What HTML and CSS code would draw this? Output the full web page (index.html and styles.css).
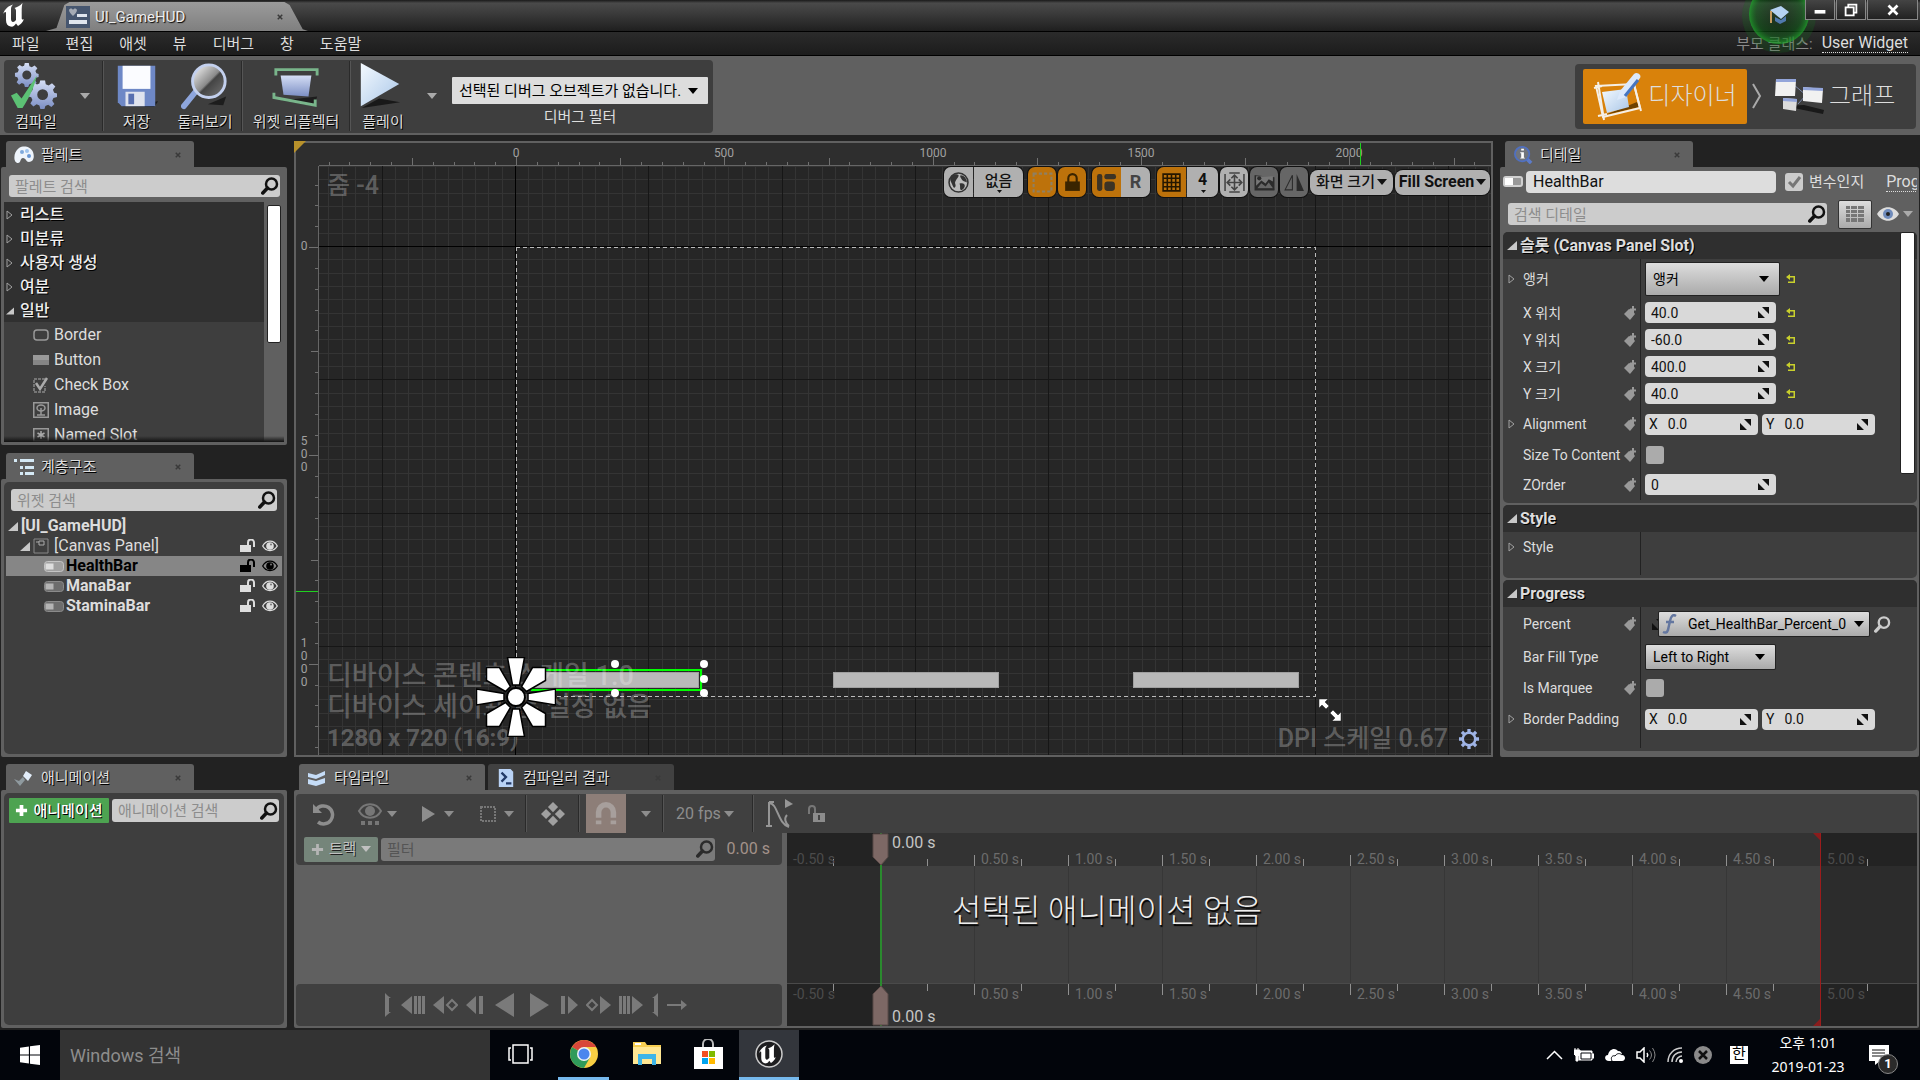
FILE: index.html
```html
<!DOCTYPE html>
<html lang="ko">
<head>
<meta charset="utf-8">
<title>UI_GameHUD</title>
<link rel="stylesheet" href="styles.css">
</head>
<body>
<svg class="defs" aria-hidden="true">
  <defs>
    <linearGradient id="steel" x1="0" y1="0" x2="0" y2="1"><stop offset="0" stop-color="#d5def5"/><stop offset="1" stop-color="#7c8fc4"/></linearGradient>
    <linearGradient id="ice" x1="0" y1="0" x2="1" y2="1"><stop offset="0" stop-color="#f4faff"/><stop offset="1" stop-color="#a9c6e8"/></linearGradient>
    <linearGradient id="glass" x1="0" y1="0" x2="1" y2="1"><stop offset="0" stop-color="#ffffff"/><stop offset=".5" stop-color="#8a8a8a"/><stop offset=".55" stop-color="#444"/><stop offset="1" stop-color="#777"/></linearGradient>
  </defs>
  <symbol id="search" viewBox="0 0 18 18"><circle cx="10.500" cy="7" r="5.500" fill="none" stroke="currentColor" stroke-width="2.500"/><path d="M6.500 11 1.800 16" stroke="currentColor" stroke-width="3.500" stroke-linecap="round"/></symbol>
  <symbol id="down" viewBox="0 0 10 6"><path d="M0 0h10L5 6z" fill="currentColor"/></symbol>
  <symbol id="closed" viewBox="0 0 8 10"><path d="M1 1v8l5-4z" fill="none" stroke="#a0a0a0"/></symbol>
  <symbol id="open" viewBox="0 0 10 9"><path d="M10 0v9H0z" fill="#c8c8c8"/></symbol>
  <symbol id="x" viewBox="0 0 8 8"><path d="m1 1 6 6M7 1 1 7" stroke="#3a3a3a" stroke-width="2"/></symbol>
  <symbol id="u" viewBox="0 0 26 26"><path d="M1 12C3 7 6 4 11 2.500 9 4.500 9 6 9 8v9c0 2 1 3 2 3s2-1 3-2V9c0-1.500-.5-2.500-1.500-3C15 5 18 4 20.500 1c-.5 2-.8 4-.8 6v9c0 1.500.8 2 2.300 1-1.500 4-4.500 6-6 7l-2-2.500C12.500 24 11 25 8.500 24.500 5.500 24 4 21.500 4 18V11c0-1.500-1-1.500-3 1z" fill="currentColor"/></symbol>
  <symbol id="bar" viewBox="0 0 20 11"><rect x=".5" y=".5" width="19" height="10" rx="3" fill="#6d6d6d" stroke="#8a8a8a"/><rect x="1.500" y="2.500" width="8" height="6" fill="#b5b5b5"/></symbol>
  <symbol id="barsel" viewBox="0 0 20 11"><rect x=".5" y=".5" width="19" height="10" rx="3" fill="#a0a0a0" stroke="#c4c4c4"/><rect x="1.500" y="2.500" width="8" height="6" fill="#dedede"/></symbol>
  <symbol id="unlock" viewBox="0 0 16 14"><path d="M0 6h11v7H0z" fill="currentColor"/><path d="M8 6V3.500a3 3 0 0 1 6 0V8" fill="none" stroke="currentColor" stroke-width="2"/></symbol>
  <symbol id="eye" viewBox="0 0 16 12"><path d="M.7 6C4-.5 12-.5 15.300 6 12 12 4 12 .7 6z" fill="none" stroke="currentColor" stroke-width="1.300"/><circle cx="8" cy="6" r="3.800" fill="currentColor"/><circle cx="9" cy="4.500" r="1" fill="#777"/></symbol>
  <symbol id="pin" viewBox="0 0 12 14"><path d="M0 8l5-5 3 1 3 4-5 6z" fill="#999"/><path d="M9 0v7M6 3.500h6" stroke="#999" stroke-width="2"/></symbol>
  <symbol id="drag" viewBox="0 0 11 11"><path d="M4 0h7v7zM0 4v7h7z" fill="#111"/></symbol>
  <symbol id="reset" viewBox="0 0 10 10"><path d="M0 3l4-3v2h5v7H2V7.500h5.500v-4H4V6z" fill="#c9d02c"/></symbol>
  <symbol id="gear" viewBox="0 0 24 24"><path fill-rule="evenodd" d="M10 0h4l.6 3.300 2.400 1L19.800 2.500l2.800 2.800-2 2.700 1 2.400L24 11v3l-3 .8-1 2.300 1.800 2.700-2.500 2.500-2.700-1.800-2.300 1L13.500 24h-3.400l-.8-3-2.300-1-2.700 1.800L1.800 19.300 3.500 16.500l-1-2.300L0 13.500V10l3-.8 1-2.300L2.300 4.300 4.800 2l2.500 1.600 2-.9zM12 7.500a4.500 4.500 0 1 0 0 9 4.500 4.500 0 0 0 0-9z"/></symbol>
  <symbol id="cog" viewBox="0 0 24 24"><circle cx="12" cy="12" r="7.500" fill="none" stroke="currentColor" stroke-width="3"/><path d="M12 0v4M12 20v4M0 12h4M20 12h4M3.500 3.500l3 3M17.500 17.500l3 3M20.500 3.500l-3 3M6.500 17.500l-3 3" stroke="currentColor" stroke-width="4"/></symbol>
</svg>

<header class="titlebar">
  <svg class="logo"><use href="#u"/></svg>
  <div class="doc-tab">
    <svg class="doc-icon" viewBox="0 0 24 22"><rect width="24" height="22" fill="#46566f"/><path d="M3 4c1-2 3-2 4 0 1-2 3-2 4 0 0 2-2 4-4 6-2-2-4-4-4-6z" fill="#a5abb5"/><path d="M11 8h10v3H11zM3 14h18v4H3z" fill="#dfe5ee"/></svg>
    <span>UI_GameHUD</span>
    <svg class="tab-x"><use href="#x"/></svg>
  </div>
  <svg class="tutorial" viewBox="0 0 76 60"><defs><radialGradient id="glow"><stop offset=".2" stop-color="#0a1a0a" stop-opacity=".3"/><stop offset=".75" stop-color="#0d5b16" stop-opacity=".4"/><stop offset="1" stop-color="#1fa52b" stop-opacity=".75"/></radialGradient></defs><circle cx="38" cy="16" r="37" fill="#126b1b" opacity=".25"/><circle cx="38" cy="14" r="30" fill="url(#glow)"/><path d="M29 10l11-4 8 6-8 7z" fill="#b5d2f2"/><path d="M34 17l6 3 5-4v5l-6 3-5-3z" fill="#5079ad"/><path d="M30 11v12" stroke="#c69a5e" stroke-width="2"/></svg>
  <div class="window-buttons">
    <button aria-label="최소화"><svg viewBox="0 0 20 20"><path d="M4 10h12v4H4z" fill="#fff"/></svg></button>
    <button aria-label="복원"><svg viewBox="0 0 20 20"><path d="M7 7V4h9v9h-3M4 7h9v9H4z" fill="none" stroke="#fff" stroke-width="2"/></svg></button>
    <button aria-label="닫기" class="wide"><svg viewBox="0 0 20 20"><path d="m5 5 10 10M15 5 5 15" stroke="#fff" stroke-width="3"/></svg></button>
  </div>
</header>

<nav class="menubar">
  <button>파일</button><button>편집</button><button>애셋</button><button>뷰</button><button>디버그</button><button>창</button><button>도움말</button>
  <span class="parent">부모 클래스:</span><a href="#">User Widget</a>
</nav>

<section class="toolbar">
  <div class="tools">
    <button class="tool compile"><svg viewBox="0 0 50 50"><g fill="url(#steel)"><use href="#gear" x="5" y="1" width="25" height="25"/><use href="#gear" x="19" y="19" width="30" height="30"/></g><path d="M1 35l6-3 5 6 16-24c-3 13-8 23-15 34H8z" fill="#5cc174"/></svg><span>컴파일</span></button>
    <button class="drop" aria-label="컴파일 옵션"><svg><use href="#down"/></svg></button>
    <i class="sep"></i>
    <button class="tool save"><svg viewBox="0 0 50 50"><path d="M9 46l34 1 4-6" fill="#1b1b1b"/><path d="M5 4h39v42H9l-4-4z" fill="#6e88c6"/><path d="M10 4h29v24H10z" fill="#fbfcff"/><path d="M13 31h20v15H13z" fill="#dfe3ee"/><path d="M16 33h6v11h-6z" fill="#586fb0"/></svg><span>저장</span></button>
    <button class="tool browse"><svg viewBox="0 0 50 50"><path d="M28 44l16 1 3-9z" fill="#1d1d1d"/><path d="M16 30 3 46" stroke="#8ea6dd" stroke-width="6" stroke-linecap="round"/><circle cx="29" cy="20" r="17" fill="url(#glass)" stroke="#c3d0ee" stroke-width="3"/></svg><span>둘러보기</span></button>
    <i class="sep"></i>
    <button class="tool reflector"><svg viewBox="0 0 50 50"><path d="M10 40l34 6 3-10z" fill="#1d1d1d"/><path d="M9 14h32l-3 22-26-2z" fill="url(#steel)"/><path d="M4 14V8h43v6M2 32v5l43 8v-6" fill="none" stroke="#79b58b" stroke-width="3"/></svg><span>위젯 리플렉터</span></button>
    <i class="sep"></i>
    <button class="tool play"><svg viewBox="0 0 50 50"><path d="M5 48l18-10 22 4z" fill="#191919"/><path d="M4 1v45l40-23z" fill="url(#ice)"/></svg><span>플레이</span></button>
    <button class="drop" aria-label="플레이 옵션"><svg><use href="#down"/></svg></button>
    <div class="debug">
      <div class="combo"><select id="debug"><option>선택된 디버그 오브젝트가 없습니다.</option></select><svg class="arrow"><use href="#down"/></svg></div>
      <label for="debug">디버그 필터</label>
    </div>
  </div>
  <div class="modes">
    <button class="mode active"><svg viewBox="0 0 50 50"><path d="M12 44l34-8-2-5z" fill="#6e4200"/><path d="M3 15l38-2 6 24-37 9z" fill="none" stroke="#f5efe6" stroke-width="2"/><path d="M5 11l6 38M1 17l8-2M5 45l9-2M40 10l8 30" stroke="#f5efe6" stroke-width="2"/><path d="M9 21l24-3 3 18-22 6z" fill="url(#ice)"/><path d="M24 29l3-9L41 3c3-3 8 1 6 4L33 26z" fill="#dce9fb"/><path d="M32 25 45 9" stroke="#4675c0" stroke-width="3"/></svg><span>디자이너</span></button>
    <svg class="chevron" viewBox="0 0 12 26"><path d="M2 1l7 12-7 12" fill="none" stroke="#aaa" stroke-width="2"/></svg>
    <button class="mode"><svg viewBox="0 0 50 50"><path d="M10 35l20-1 20 5-1 4z" fill="#191919"/><path d="M20 14l12 10-8 9" fill="none" stroke="#7a88ab"/><path d="M2 8l20 1-1 16H1z" fill="#f1f1f1"/><path d="M29 16l20 2-1 14-19-2z" fill="#f1f1f1"/><path d="M9 27l14 1-1 12-13-2z" fill="#dcdcdc"/><path d="M2 8h20v3H2zM29 16l20 1v3l-20-1zM9 27l14 1v3l-14-1z" fill="#93a5da"/></svg><span>그래프</span></button>
  </div>
</section>

<main class="workspace">
  <div class="left">
    <section class="dock palette">
      <div class="tab"><svg viewBox="0 0 20 18"><path d="M5 2c5-3 12-1 14 4 2 6 0 10-4 10-3 0-3-4-6-4s-2 5-5 5c-5 0-5-11 1-15z" fill="#eef4fb"/><circle cx="8" cy="6" r="2" fill="#7fa9dc"/><circle cx="13" cy="5" r="2" fill="#9fc3ec"/><circle cx="15" cy="10" r="2" fill="#6694d2"/></svg><span>팔레트</span><svg class="tab-x"><use href="#x"/></svg></div>
      <div class="panel">
        <div class="search"><input aria-label="팔레트 검색" placeholder="팔레트 검색"><svg><use href="#search"/></svg></div>
        <div class="list">
          <ul>
            <li class="cat"><svg><use href="#closed"/></svg>리스트</li>
            <li class="cat"><svg><use href="#closed"/></svg>미분류</li>
            <li class="cat"><svg><use href="#closed"/></svg>사용자 생성</li>
            <li class="cat"><svg><use href="#closed"/></svg>여분</li>
            <li class="cat"><svg><use href="#open"/></svg>일반</li>
            <li class="item"><svg viewBox="0 0 16 16"><rect x="1" y="3" width="14" height="10" rx="3" fill="none" stroke="#999" stroke-width="1.500"/></svg>Border</li>
            <li class="item"><svg viewBox="0 0 16 16"><path d="M0 3h16v10H0z" fill="#858585"/><path d="M0 3h16v5H0z" fill="#999"/></svg>Button</li>
            <li class="item"><svg viewBox="0 0 16 16"><path d="M12 2H1v13h11V9" fill="none" stroke="#888" stroke-width="1.500" stroke-dasharray="3 1"/><path d="M3 6l4 6 7-11" fill="none" stroke="#aaa" stroke-width="2.500"/></svg>Check Box</li>
            <li class="item"><svg viewBox="0 0 16 16"><path d="M.75.75h14.500v14.500H.75z" fill="none" stroke="#999" stroke-width="1.500"/><ellipse cx="8" cy="6" rx="4" ry="3" fill="none" stroke="#999" stroke-width="1.500"/><path d="M8 6v7M4 13h8" stroke="#999" stroke-width="1.500"/></svg>Image</li>
            <li class="item"><svg viewBox="0 0 16 16"><path d="M.75 1.750h14.500v12.500H.75z" fill="none" stroke="#999" stroke-width="1.500"/><path d="M8 4v8M4.500 6l7 4M11.500 6l-7 4" stroke="#aaa" stroke-width="1.500"/></svg>Named Slot</li>
          </ul>
          <div class="scroll"></div>
        </div>
      </div>
    </section>
    <section class="dock hierarchy">
      <div class="tab"><svg viewBox="0 0 20 18"><path d="M0 1h3v3H0zM6 1h14v3H6zM6 8h3v3H6zM11 8h9v3h-9zM6 14h3v3H6zM11 14h9v3h-9z" fill="#d5e9f5"/></svg><span>계층구조</span><svg class="tab-x"><use href="#x"/></svg></div>
      <div class="panel"><div class="inner">
        <div class="search"><input aria-label="위젯 검색" placeholder="위젯 검색"><svg><use href="#search"/></svg></div>
        <ul class="tree">
          <li class="root"><svg class="exp"><use href="#open"/></svg><b>[UI_GameHUD]</b></li>
          <li class="sub"><svg class="exp"><use href="#open"/></svg><svg class="cnv" viewBox="0 0 16 16"><path d="M1 1h14v14H1z" fill="none" stroke="#888"/><path d="M3 4h3M6 3h5v4H6z" fill="none" stroke="#aaa"/></svg><span>[Canvas Panel]</span><svg class="lk"><use href="#unlock"/></svg><svg class="ey"><use href="#eye"/></svg></li>
          <li class="leaf sel"><svg class="br"><use href="#barsel"/></svg><b>HealthBar</b><svg class="lk"><use href="#unlock"/></svg><svg class="ey"><use href="#eye"/></svg></li>
          <li class="leaf"><svg class="br"><use href="#bar"/></svg><b>ManaBar</b><svg class="lk"><use href="#unlock"/></svg><svg class="ey"><use href="#eye"/></svg></li>
          <li class="leaf"><svg class="br"><use href="#bar"/></svg><b>StaminaBar</b><svg class="lk"><use href="#unlock"/></svg><svg class="ey"><use href="#eye"/></svg></li>
        </ul>
      </div></div>
    </section>
  </div>

  <section class="designer">
    <div class="corner"></div>
    <svg class="ruler-x"></svg>
    <svg class="ruler-y"></svg>
    <div class="surface">
      <svg class="grid"></svg>
      <div class="artboard">
        <svg class="outline"><rect x="0" y="0" width="100%" height="100%"/></svg>
        <div class="pbar health"></div><div class="pbar mana"></div><div class="pbar stamina"></div>
        <div class="selection"></div>
        <i class="h h1"></i><i class="h h2"></i><i class="h h3"></i><i class="h h4"></i>
      </div>
      <div class="device"><p>디바이스 콘텐츠 스케일 1.0</p><p>디바이스 세이프 존 설정 없음</p><p class="res">1280 x 720 (16:9)</p></div>
      <svg class="anchor" viewBox="-40 -40 80 80"><g fill="#fff" stroke="#000" stroke-width="1.500"><path d="M-8.500-39.500h17L3.500-12h-7zM-8.500 39.500h17L3.500 12h-7zM-39.500-8v16L-12 3.500v-7zM39.500-8v16L12 3.500v-7z"/><path d="M-29.500-29.500h13l11 19-5 5-19-11zM29.500-29.500h-13l-11 19 5 5 19-11zM-29.500 29.500h13l11-19-5-5-19 11zM29.500 29.500h-13l-11-19 5-5 19 11z"/><circle r="9" stroke-width="2"/></g></svg>
      <p class="zoom">줌 -4</p>
      <div class="dpi"><span>DPI 스케일 0.67</span><button aria-label="설정"><svg><use href="#cog"/></svg></button></div>
      <svg class="resize" viewBox="0 0 24 24"><path d="M1 1h9L7 4l4 4-3 3-4-4-3 3zM23 23h-9l3-3-5-5 3-3 5 5 3-3z" fill="#fff" stroke="#222" stroke-width=".5"/></svg>
      <div class="view-tools">
        <div class="group"><button aria-label="현지화"><svg viewBox="0 0 20 20"><circle cx="10" cy="10" r="9" fill="#bbb" stroke="#333" stroke-width="1.500"/><path d="M3 4c4-3 8-2 7 0S8 7 7 9s1 3 0 5-2 1-3-2-3-5-1-8zM12 3c4 0 6 4 6 7-2-1-4-1-5-3s-2-3-1-4zM11 11c3-1 5 0 5 2s-3 5-4 4 0-4-1-6z" fill="#333"/></svg></button><button class="loc">없음<svg class="tiny"><use href="#down"/></svg></button></div>
        <button class="single on" aria-label="점선 윤곽선"><svg viewBox="0 0 20 20"><path d="M1.500 1.500h17v17h-17z" fill="none" stroke="#8f8063" stroke-width="2" stroke-dasharray="3 2"/></svg></button>
        <button class="single on lock" aria-label="잠금"><svg viewBox="0 0 20 20"><path d="M3 9h14v9H3z" fill="#3a2400"/><path d="M6 10V6a4 4 0 0 1 8 0v4" fill="none" stroke="#3a2400" stroke-width="2"/></svg></button>
        <div class="group third"><button class="on" aria-label="레이아웃 변환"><svg viewBox="0 0 20 20"><rect x="1" y="2" width="5" height="16" rx="2" fill="#3c3325"/><rect x="8" y="2" width="11" height="5" rx="2" fill="#3c3325"/><rect x="8" y="9" width="10" height="9" rx="3" fill="#3c3325"/></svg></button><button class="rbtn">R</button></div>
        <div class="group fourth"><button class="on" aria-label="격자 스냅"><svg viewBox="0 0 20 20"><path d="M2 2h16v16H2zM2 6h16M2 10h16M2 14h16M6 2v16M10 2v16M14 2v16" fill="none" stroke="#261700" stroke-width="1.500"/></svg></button><button class="four">4<svg class="tiny"><use href="#down"/></svg></button></div>
        <button class="single" aria-label="화면 맞춤"><svg viewBox="0 0 20 20"><path d="M1 2v16M19 2v16M5 1h10M5 19h10M10 3v14M3 10h14M7 6l3-3 3 3M7 14l3 3 3-3M6 7l-3 3 3 3M14 7l3 3-3 3" fill="none" stroke="#444" stroke-width="1.500"/></svg></button>
        <button class="single off" aria-label="배경 이미지"><svg viewBox="0 0 20 20"><path d="M1 3v14h18V5M2 16l5-6 4 3 3-4 5 7z" fill="#2b2b2b" stroke="#2b2b2b"/><path d="M2 4h16v5l-4-2-3 4-4-3-5 5z" fill="#777"/><circle cx="5" cy="6" r="2" fill="#2b2b2b"/></svg></button>
        <button class="single off" aria-label="뒤집기"><svg viewBox="0 0 20 20"><path d="M8 3v14H1z" fill="none" stroke="#2b2b2b"/><path d="M12 2v16h7z" fill="#2b2b2b"/></svg></button>
        <button class="text size">화면 크기<svg><use href="#down"/></svg></button>
        <button class="text">Fill Screen<svg><use href="#down"/></svg></button>
      </div>
    </div>
  </section>

  <section class="dock details">
    <div class="tab"><svg viewBox="0 0 20 20"><path d="M13 13l6 6" stroke="#5c7bc9" stroke-width="4"/><circle cx="9" cy="9" r="8" fill="#70747c" stroke="#5070c0" stroke-width="2"/><path d="M8 3h3v2H8zM7 7h4v6h1v1H7v-1h1V8H7z" fill="#fff"/></svg><span>디테일</span><svg class="tab-x"><use href="#x"/></svg></div>
    <div class="panel">
      <div class="name-row"><svg class="name-icon" viewBox="0 0 20 11"><rect width="20" height="11" rx="3" fill="#d0d0d0"/><rect x="2" y="2" width="16" height="7" rx="1" fill="#999"/><rect x="2" y="2" width="8" height="7" fill="#fff"/></svg><input aria-label="이름" value="HealthBar"><input type="checkbox" id="isvar" checked><label for="isvar">변수인지</label><a href="#">Prog</a></div>
      <div class="filter-row"><div class="search"><input aria-label="검색 디테일" placeholder="검색 디테일"><svg><use href="#search"/></svg></div>
        <button class="matrix" aria-label="프로퍼티 매트릭스"><svg viewBox="0 0 18 18"><path d="M0 1h4v3H0zM5 1h6v3H5zM12 1h6v3h-6zM0 5h4v3H0zM5 5h6v3H5zM12 5h6v3h-6zM0 9h4v3H0zM5 9h6v3H5zM12 9h6v3h-6zM0 13h4v4H0zM5 13h6v4H5zM12 13h6v4h-6z" fill="#777"/></svg></button>
        <button class="vis" aria-label="보기 옵션"><svg class="eye2" viewBox="0 0 22 14"><path d="M0 7C5-2 17-2 22 7 17 16 5 16 0 7z" fill="#ddd"/><circle cx="11" cy="7" r="5" fill="#6f8bbb"/><circle cx="11" cy="7" r="2" fill="#222"/></svg><svg class="eyed"><use href="#down"/></svg></button></div>
      <div class="props">
        <div class="cat-box">
          <h2><svg><use href="#open"/></svg>슬롯 (Canvas Panel Slot)</h2>
          <div class="body slot">
            <div class="row r40"><div class="k"><svg class="ex"><use href="#closed"/></svg><label for="anc">앵커</label></div><div class="v"><div class="combo tall"><select id="anc"><option>앵커</option></select><svg class="arrow"><use href="#down"/></svg></div><svg class="rs"><use href="#reset"/></svg></div></div>
            <div class="row r27"><div class="k"><label for="px">X 위치</label><svg class="pn"><use href="#pin"/></svg></div><div class="v"><div class="num"><input id="px" value="40.0"><svg><use href="#drag"/></svg></div><svg class="rs"><use href="#reset"/></svg></div></div>
            <div class="row r27"><div class="k"><label for="py">Y 위치</label><svg class="pn"><use href="#pin"/></svg></div><div class="v"><div class="num"><input id="py" value="-60.0"><svg><use href="#drag"/></svg></div><svg class="rs"><use href="#reset"/></svg></div></div>
            <div class="row r27"><div class="k"><label for="sx">X 크기</label><svg class="pn"><use href="#pin"/></svg></div><div class="v"><div class="num"><input id="sx" value="400.0"><svg><use href="#drag"/></svg></div><svg class="rs"><use href="#reset"/></svg></div></div>
            <div class="row r27"><div class="k"><label for="sy">Y 크기</label><svg class="pn"><use href="#pin"/></svg></div><div class="v"><div class="num"><input id="sy" value="40.0"><svg><use href="#drag"/></svg></div><svg class="rs"><use href="#reset"/></svg></div></div>
            <div class="row r34"><div class="k"><svg class="ex"><use href="#closed"/></svg><span>Alignment</span><svg class="pn"><use href="#pin"/></svg></div><div class="v"><div class="num half"><label for="ax">X</label><input id="ax" value="0.0"><svg><use href="#drag"/></svg></div><div class="num half"><label for="ay">Y</label><input id="ay" value="0.0"><svg><use href="#drag"/></svg></div></div></div>
            <div class="row r28"><div class="k"><label for="stc">Size To Content</label><svg class="pn"><use href="#pin"/></svg></div><div class="v"><input type="checkbox" id="stc"></div></div>
            <div class="row r31"><div class="k"><label for="zo">ZOrder</label><svg class="pn"><use href="#pin"/></svg></div><div class="v"><div class="num"><input id="zo" value="0"><svg><use href="#drag"/></svg></div></div></div>
          </div>
        </div>
        <div class="cat-box">
          <h2><svg><use href="#open"/></svg>Style</h2>
          <div class="body style"><div class="row r30"><div class="k"><svg class="ex"><use href="#closed"/></svg><span>Style</span></div><div class="v"></div></div></div>
        </div>
        <div class="cat-box">
          <h2><svg><use href="#open"/></svg>Progress</h2>
          <div class="body prog">
            <div class="row r34"><div class="k"><label for="pct">Percent</label><svg class="pn"><use href="#pin"/></svg></div><div class="v"><svg class="bind"><use href="#drag"/></svg><div class="combo func"><svg class="fn" viewBox="0 0 18 20"><path d="M15 2c-3-2-5 0-6 5L7 16c-1 3-3 3-5 2M5 8h8" fill="none" stroke="#6477a0" stroke-width="2.500"/></svg><select id="pct"><option>Get_HealthBar_Percent_0</option></select><svg class="arrow"><use href="#down"/></svg></div><svg class="find"><use href="#search"/></svg></div></div>
            <div class="row r32"><div class="k"><label for="bft">Bar Fill Type</label></div><div class="v"><div class="combo fill"><select id="bft"><option>Left to Right</option></select><svg class="arrow"><use href="#down"/></svg></div></div></div>
            <div class="row r30"><div class="k"><label for="mq">Is Marquee</label><svg class="pn"><use href="#pin"/></svg></div><div class="v"><input type="checkbox" id="mq"></div></div>
            <div class="row r32"><div class="k"><svg class="ex"><use href="#closed"/></svg><span>Border Padding</span></div><div class="v"><div class="num half"><label for="bx">X</label><input id="bx" value="0.0"><svg><use href="#drag"/></svg></div><div class="num half"><label for="by">Y</label><input id="by" value="0.0"><svg><use href="#drag"/></svg></div></div></div>
          </div>
        </div>
        <div class="prop-scroll"></div>
      </div>
    </div>
  </section>

  <section class="dock anim">
    <div class="tab"><svg viewBox="0 0 20 16"><path d="M0 9l5 2 4-4 2 3-5 6z" fill="#8f9a9f"/><path d="M12 1l6 4-4 6-5-5z" fill="#e3eefa"/></svg><span>애니메이션</span><svg class="tab-x"><use href="#x"/></svg></div>
    <div class="panel"><div class="inner">
      <button class="add"><svg viewBox="0 0 14 14"><path d="M7 1v12M1 7h12" stroke="#fff" stroke-width="4"/></svg>애니메이션</button>
      <div class="search"><input aria-label="애니메이션 검색" placeholder="애니메이션 검색"><svg><use href="#search"/></svg></div>
    </div></div>
  </section>

  <section class="dock timeline">
    <div class="tabs">
      <div class="tab"><svg viewBox="0 0 20 16"><path d="M1 3l8 2 9-4v4l-9 4-8-2zM1 9l8 2 9-3v5l-9 3-8-2z" fill="#c5dcf7"/></svg><span>타임라인</span><svg class="tab-x"><use href="#x"/></svg></div>
      <div class="tab back"><svg viewBox="0 0 18 20"><path d="M1 0h13l3 3v17H1z" fill="#b9d2f5"/><path d="M4 4l5 5-5 5M9 16h6" fill="none" stroke="#233a68" stroke-width="2.500"/></svg><span>컴파일러 결과</span><svg class="tab-x"><use href="#x"/></svg></div>
    </div>
    <div class="panel">
      <div class="seq-tools">
        <button class="b1" aria-label="되돌리기"><svg viewBox="0 0 24 24"><path d="M5 8a9 9 0 1 1 2 12" fill="none" stroke="#8d8d8d" stroke-width="3.500"/><path d="M2 2v9h9z" fill="#8d8d8d"/></svg></button>
        <button class="b2" aria-label="보기"><svg viewBox="0 0 24 24"><path d="M1 9c5-9 17-9 22 0-5 9-17 9-22 0z" fill="none" stroke="#777" stroke-width="2"/><circle cx="12" cy="9" r="5" fill="#777"/><path d="M3 19h4v4H3zM10 19h4v4h-4zM17 19h4v4h-4z" fill="#777"/></svg><svg class="dn"><use href="#down"/></svg></button>
        <button class="b3" aria-label="재생 옵션"><svg viewBox="0 0 24 24"><path d="M6 4v16l13-8z" fill="#8d8d8d"/></svg><svg class="dn"><use href="#down"/></svg></button>
        <button class="b3" aria-label="선택 옵션"><svg viewBox="0 0 24 24"><path d="M5 5h14v14H5z" fill="none" stroke="#777" stroke-width="2" stroke-dasharray="2 1"/></svg><svg class="dn"><use href="#down"/></svg></button>
        <i class="sep"></i>
        <button class="b4" aria-label="자동 키"><svg viewBox="0 0 26 26"><path d="M13 0l5.500 5.500L13 11 7.500 5.500zM13 15l5.500 5.500L13 26l-5.500-5.500zM5.500 7.500 11 13l-5.500 5.500L0 13zM20.500 7.500 26 13l-5.500 5.500L15 13z" fill="#a0a0a0"/></svg></button>
        <i class="sep"></i>
        <button class="magnet" aria-label="스냅"><svg viewBox="0 0 24 26"><path d="M4 17V11a8 8 0 0 1 16 0v6" fill="none" stroke="#a79f9c" stroke-width="6"/><path d="M1 20h6v4H1zM17 20h6v4h-6z" fill="#a79f9c"/></svg></button>
        <button class="b5" aria-label="스냅 옵션"><svg class="dn"><use href="#down"/></svg></button>
        <i class="sep"></i>
        <button class="fps">20 fps<svg class="dn"><use href="#down"/></svg></button>
        <i class="sep"></i>
        <button class="b6" aria-label="커브 에디터"><svg viewBox="0 0 28 30"><path d="M4 26V4c9 0 8 20 20 24M4 3h5M1 27h6M22 16c-3 3-2 8 2 11" fill="none" stroke="#969696" stroke-width="2"/><path d="M20 0v9l8-4z" fill="#969696"/></svg></button>
        <button class="b7" aria-label="잠금"><svg viewBox="0 0 18 18"><path d="M5 8h12v9H5z" fill="#8c8c8c"/><path d="M1 9V4c0-4 6-4 6 0v4" fill="none" stroke="#777" stroke-width="2"/><path d="M11 10v5" stroke="#444" stroke-width="2"/></svg></button>
      </div>
      <div class="seq-body">
        <div class="tracks">
          <div class="track-bar"><button class="track"><svg viewBox="0 0 14 14"><path d="M7 1v12M1 7h12" stroke="#b5b5b5" stroke-width="3"/></svg>트랙<svg class="dn"><use href="#down"/></svg></button><div class="search"><input aria-label="필터" placeholder="필터"><svg><use href="#search"/></svg></div><span class="time">0.00 s</span></div>
          <div class="transport">
            <button aria-label="시작 설정"><svg width="8" height="24" viewBox="0 0 8 24"><path d="M0 0c2 2 4 4 6 5H4v14h2c-2 1-4 3-6 5z"/></svg></button>
            <button aria-label="처음"><svg width="24" height="20" viewBox="0 0 24 20"><path d="M11 1v18L0 10zM13 1h3v18h-3zM17 1h3v18h-3zM21 1h3v18h-3z"/></svg></button>
            <button aria-label="이전 키"><svg width="25" height="20" viewBox="0 0 25 20"><path d="M11 1v18L0 10z"/><path d="M19 5l5 5-5 5-5-5z" fill="none" stroke="#7a7a7a" stroke-width="2"/></svg></button>
            <button aria-label="이전 프레임"><svg width="17" height="20" viewBox="0 0 17 20"><path d="M10 1v18L0 10zM13 1h4v18h-4z"/></svg></button>
            <button class="big" aria-label="역재생"><svg width="19" height="24" viewBox="0 0 19 24"><path d="M19 0v24L0 12z"/></svg></button>
            <button class="big" aria-label="재생"><svg width="19" height="24" viewBox="0 0 19 24"><path d="M0 0v24l19-12z"/></svg></button>
            <button aria-label="다음 프레임"><svg width="17" height="20" viewBox="0 0 17 20"><path d="M0 1h4v18H0zM7 1v18l10-9z"/></svg></button>
            <button aria-label="다음 키"><svg width="25" height="20" viewBox="0 0 25 20"><path d="M14 1v18l11-9z"/><path d="M6 5l5 5-5 5-5-5z" fill="none" stroke="#7a7a7a" stroke-width="2"/></svg></button>
            <button aria-label="끝"><svg width="24" height="20" viewBox="0 0 24 20"><path d="M0 1h3v18H0zM4 1h3v18H4zM8 1h3v18H8zM13 1v18l11-9z"/></svg></button>
            <button aria-label="끝 설정"><svg width="8" height="24" viewBox="0 0 8 24"><path d="M7 0C5 2 3 4 1 5h2v14H1c2 1 4 3 6 5z"/></svg></button>
            <button aria-label="반복 안함"><svg width="20" height="12" viewBox="0 0 20 12"><path d="M0 5h14V1l6 5-6 5V7H0z"/></svg></button>
          </div>
        </div>
        <div class="time-area"><svg class="ticks"></svg><p class="none">선택된 애니메이션 없음</p></div>
      </div>
    </div>
  </section>
</main>

<footer class="taskbar">
  <button class="start" aria-label="시작"><svg viewBox="0 0 18 18"><path d="M0 2.500 8 1.300V8.500H0zM9 1.200 18 0v8.500H9zM0 9.500h8v7.200L0 15.500zM9 9.500h9V18L9 16.800z" fill="#fff"/></svg></button>
  <input class="win-search" aria-label="Windows 검색" placeholder="Windows 검색">
  <button class="app view" aria-label="작업 보기"><svg width="25" height="20" viewBox="0 0 25 20"><path d="M5 1h15v18H5zM3 4H1v12h2M22 4h2v12h-2" fill="none" stroke="#fff" stroke-width="1.500"/></svg></button>
  <button class="app run" aria-label="Chrome"><svg width="28" height="28" viewBox="0 0 28 28"><circle cx="14" cy="14" r="14" fill="#f8ce43"/><path d="M14 14 1.900 7A14 14 0 0 1 26.100 7z" fill="#d8473a"/><path d="M14 14 1.900 7A14 14 0 0 0 14 28l6-10.500z" fill="#2f9b5a"/><path d="M14 7h12.100L20 17.500z" fill="#f8ce43"/><path d="M14 7h12.100L24 4H10z" fill="#d8473a"/><circle cx="14" cy="14" r="7" fill="#eef3f8"/><circle cx="14" cy="14" r="5.500" fill="#4a86ee"/></svg></button>
  <button class="app" aria-label="파일 탐색기"><svg width="28" height="24" viewBox="0 0 28 24"><path d="M0 0h12l2 3h14v19H0z" fill="#f7cf52"/><path d="M2 1h6v2H2z" fill="#fff"/><path d="M0 5h28v17H0z" fill="#ffe793"/><path d="M5 23v-11h18v11h-4v-6H9v6z" fill="#3eb5e8"/></svg></button>
  <button class="app store" aria-label="Store"><svg width="29" height="30" viewBox="0 0 29 30"><path d="M9 10V5a5 5 0 0 1 10 0v5" fill="none" stroke="#bbb" stroke-width="2"/><path d="M0 8h29v22H0z" fill="#fff"/><path d="M8 12h6v6H8z" fill="#f25022"/><path d="M15 12h6v6h-6z" fill="#7fba00"/><path d="M8 19h6v6H8z" fill="#00a4ef"/><path d="M15 19h6v6h-6z" fill="#ffb900"/></svg></button>
  <button class="app cur" aria-label="Unreal Editor"><svg width="28" height="28" viewBox="0 0 28 28"><circle cx="14" cy="14" r="13" fill="#1d1d1f" stroke="#ccc" stroke-width="1.500"/><use href="#u" x="3" y="3" width="21" height="22" color="#fff"/></svg></button>
  <div class="tray">
    <svg width="17" height="10" viewBox="0 0 17 10"><path d="M1 9l7.500-7.500L16 9" fill="none" stroke="#fff" stroke-width="1.500"/></svg>
    <svg width="20" height="14" viewBox="0 0 20 14"><path d="M5 3h13v9H5z" fill="#fff" stroke="#fff"/><path d="M18 6h2v4h-2zM0 2h6v4l-2 2v5H2V8L0 6zM1 0v2M4 0v2" fill="#fff" stroke="#fff"/><path d="M7 5h10v6H7z" fill="#fff" stroke="#05070c"/></svg>
    <svg width="20" height="14" viewBox="0 0 20 14"><path d="M4 13C-1 13-1 7 3 7 4 1 10-1 13 3c3 0 4 2 4 4 4 0 4 6 0 6z" fill="#fff"/><path d="M7 13c-2-4 1-6 3-5 2-3 5-3 7-1" fill="none" stroke="#05070c"/></svg>
    <svg width="20" height="16" viewBox="0 0 20 16"><path d="M1 5h3l4-4v14l-4-4H1z" fill="none" stroke="#fff" stroke-width="1.500"/><path d="M11 6q1.500 2 0 4" fill="none" stroke="#fff" stroke-width="1.500"/><path d="M13.500 3.500q4 4.500 0 9M16.500 1q5 7 0 14" fill="none" stroke="#888"/></svg>
    <svg width="16" height="16" viewBox="0 0 16 16"><path d="M1 15C1 7 7 1 15 1M5 15C5 9 9 5 15 5M9 15c0-3 3-6 6-6" fill="none" stroke="#ccc" stroke-width="1.500"/><circle cx="14" cy="14" r="2" fill="#fff"/></svg>
    <svg width="18" height="18" viewBox="0 0 18 18"><circle cx="9" cy="9" r="9" fill="#8a8a8a"/><path d="m5 5 8 8M13 5l-8 8" stroke="#111" stroke-width="2.500"/></svg>
    <span class="ime">한</span>
  </div>
  <div class="clock"><span>오후 1:01</span><span>2019-01-23</span></div>
  <div class="notice"><svg viewBox="0 0 20 20"><path d="M0 0h20v16h-9l-5 4v-4H0z" fill="#fff"/><path d="M3 5h13M3 8h13M3 11h13" stroke="#111"/></svg><span class="badge">1</span></div>
</footer>
<script src="app.js"></script>
</body>
</html>
```

FILE: styles.css
```css
* { box-sizing: border-box; }
html, body { height: 100%; }
body { margin: 0; display: flex; flex-direction: column; background: #222; color: #ddd; overflow: hidden;
  font: 15px/20px Roboto, "Noto Sans CJK KR", sans-serif; }
button, input, select { font: inherit; color: inherit; margin: 0; }
button { background: none; border: 0; padding: 0; display: flex; align-items: center; justify-content: center; white-space: nowrap; }
ul { list-style: none; margin: 0; padding: 0; }
p, h2 { margin: 0; }
svg { flex: none; display: block; }
a { color: inherit; text-decoration: none; border-bottom: 1px dotted #ddd; }
.defs { position: absolute; width: 0; height: 0; }

/* title and menu */
.titlebar { position: relative; flex: 0 0 32px; display: flex; align-items: flex-end; border-bottom: 1px solid #000;
  background: linear-gradient(#1a1a1a, #4a4a4a 10%, #3a3a3a 45%, #1f1f1f); }
.logo { width: 28px; height: 26px; margin: 0 0 3px 1px; color: #fff; }
.doc-tab { width: 262px; height: 29px; margin-left: 17px; padding: 0 25px 0 20px; display: flex; align-items: center; gap: 5px;
  background: linear-gradient(#9b9b9b, #7f7f7f); clip-path: polygon(0 100%, 4% 90%, 7% 10%, 9% 0, 91% 0, 93% 10%, 98% 94%, 100% 100%);
  color: #eee; font-size: 15px; text-shadow: 1px 1px 1px #000; }
.doc-icon { width: 24px; height: 22px; }
.tab-x { width: 6px; height: 6px; margin-left: auto; }
.tutorial { position: absolute; z-index: 2; top: 0; right: 103px; width: 76px; height: 60px; pointer-events: none; }
.window-buttons { position: relative; z-index: 3; align-self: flex-start; margin: 0 2px 0 auto; display: flex; gap: 1px; }
.window-buttons button { width: 30px; height: 20px; border: 1px solid #888; border-top: 0; background: linear-gradient(#444, #222); }
.window-buttons .wide { width: 51px; }
.window-buttons svg { width: 18px; height: 18px; }
.menubar { flex: 0 0 24px; display: flex; align-items: center; gap: 26px; padding: 0 12px 0 12px; border-bottom: 1px solid #000;
  background: linear-gradient(#2b2b2b, #1c1c1c); }
.menubar .parent { margin-left: auto; color: #8a8a8a; }
.menubar a { font-size: 16px; line-height: 18px; margin-left: -17px; }

/* main toolbar */
.toolbar { flex: 0 0 79px; display: flex; justify-content: space-between; align-items: center; padding: 1px 4px 0; background: #606060; }
.tools { width: 709px; height: 73px; display: flex; align-items: center; background: #3e3e3e; border-radius: 4px; }
.tool { flex-direction: column; gap: 2px; height: 73px; text-shadow: 1px 1px 0 #000; padding-top: 1px; }
.tool svg { width: 48px; height: 48px; }
.compile { width: 64px; }
.compile svg, .play svg { margin-right: 4px; }
.drop { width: 34px; height: 73px; color: #aaa; }
.drop svg { width: 10px; height: 6px; }
.sep { flex: none; width: 2px; height: 70px; background: #555; border-left: 1px solid #2a2a2a; }
.save { width: 65px; }
.browse { width: 72px; }
.reflector { width: 106px; }
.play { width: 64px; }
.debug { margin-left: auto; margin-right: 5px; width: 256px; padding-top: 12px; display: flex; flex-direction: column; align-items: center; gap: 3px; }
.combo { position: relative; display: flex; align-items: center; height: 27px; width: 100%; background: #ddd; border-radius: 1px; color: #000; }
.combo select { appearance: none; flex: 1; width: 100%; height: 100%; padding: 0 7px; border: 0; background: none; color: #000; }
.combo .arrow { position: absolute; right: 10px; width: 10px; height: 6px; pointer-events: none; }
.modes { width: 341px; height: 65px; display: flex; align-items: center; padding-left: 8px; background: #3e3e3e; border-radius: 4px; }
.mode { height: 55px; gap: 5px; font-size: 24px; line-height: 30px; font-weight: 300; }
.mode svg { width: 50px; height: 50px; }
.mode.active { width: 164px; background: #d9820b; border-radius: 2px; }
.chevron { width: 12px; height: 26px; margin: 0 11px 0 4px; }

/* workspace */
.workspace { flex: 1; min-height: 0; display: grid; grid-template: minmax(0, 1fr) 264px / 286px minmax(0, 1fr) 419px; gap: 7px; margin: 6px 1px 2px; }
.left { display: flex; flex-direction: column; gap: 8px; min-height: 0; }
.dock { display: flex; flex-direction: column; min-height: 0; min-width: 0; }
.left .dock { flex: 1; }
.tab { flex: 0 0 26px; width: 188px; margin-left: 5px; padding: 1px 13px 0 8px; display: flex; align-items: center; gap: 7px; background: #606060;
  border-radius: 3px 3px 0 0; text-shadow: 1px 1px 0 #000; }
.tab > svg:first-child { width: 20px; height: 18px; }
.panel { flex: 1; min-height: 0; display: flex; flex-direction: column; background: #606060; padding: 3px; border-radius: 2px; }
.inner { flex: 1; background: #3e3e3e; border-radius: 5px; }
.search { display: flex; align-items: center; height: 22px; background: #ccc; border-radius: 3px; color: #111; padding-right: 1px; }
.search input { flex: 1; min-width: 0; height: 22px; border: 0; background: none; padding: 1px 6px 0; }
.search input::placeholder, .win-search::placeholder { color: #8d8d8d; opacity: 1; }
.search svg { width: 18px; height: 18px; }
.palette .search { margin: 5px 4px 5px 5px; }
.list { position: relative; flex: 1; min-height: 0; display: flex; gap: 3px; overflow: hidden; }
.list::after { content: ""; position: absolute; left: 0; right: 0; bottom: 0; height: 6px; background: linear-gradient(transparent, #111); }
.list ul { flex: 1; background: #3e3e3e; }
.list li { display: flex; align-items: center; font-size: 16px; }
.cat { height: 24px; background: #303030; gap: 6px; padding: 1px 0 0 2px; font-weight: 500; text-shadow: 1px 1px 0 #000; color: #eee; }
.cat svg { width: 8px; height: 10px; }
.item { height: 25px; gap: 5px; padding-left: 29px; }
.item svg { width: 16px; height: 16px; }
.scroll { flex: none; width: 14px; height: 138px; margin: 3px 3px 0 0; background: #fff; border: 1px solid #222; border-radius: 2px; }
.hierarchy .search { margin: 7px 7px 5px; }
.tree li { display: flex; align-items: center; height: 20px; font-size: 16px; padding: 0 7px 0 0; margin: 0 2px; }
.tree b { font-weight: 700; }
.exp { width: 10px; height: 9px; margin-right: 3px; }
.tree .root { padding-left: 2px; }
.tree .sub { padding-left: 14px; }
.cnv { width: 16px; height: 16px; margin-right: 5px; }
.tree .leaf { padding-left: 38px; }
.br { width: 20px; height: 11px; margin-right: 2px; }
.lk { width: 16px; height: 14px; margin-left: auto; margin-right: 6px; }
.ey { width: 16px; height: 12px; margin-right: -3px; }
.sel { background: #868686; color: #000; }

/* designer */
.designer { position: relative; border: 2px solid #606060; display: grid; grid-template: 23px minmax(0, 1fr) / 23px minmax(0, 1fr); background: #2e2e2e; min-height: 0; }
.corner::before { content: ""; position: absolute; left: -2px; top: -2px; border: 6px solid; border-color: #b8912b transparent transparent #b8912b; }
.ruler-x, .ruler-y, .grid, .ticks { width: 100%; height: 100%; min-width: 0; min-height: 0; }
.ruler-x text, .ruler-y text { font-size: 12px; fill: #a0a0a0; text-anchor: middle; }
.surface { position: relative; overflow: hidden; background: #262626; }
.grid { position: absolute; left: 0; top: 0; }
.artboard { position: absolute; left: 197px; top: 81px; width: 799px; height: 449px; }
.outline { position: absolute; width: 100%; height: 100%; overflow: visible; }
.outline rect { fill: none; stroke: #bbb; stroke-width: 1; stroke-dasharray: 4 3; shape-rendering: crispEdges; }
.pbar { position: absolute; top: 425px; width: 166px; height: 16px; background: #b9b9b9; border: 1px solid #a0a0a0; }
.health { left: 17px; }
.mana { left: 317px; }
.stamina { left: 617px; }
.selection { position: absolute; left: 15px; top: 422px; width: 171px; height: 22px; border: 2px solid #0f0; }
.h { position: absolute; width: 8px; height: 8px; border-radius: 50%; background: #fff; }
.h1 { left: 95px; top: 413px; }
.h2 { left: 184px; top: 413px; }
.h3 { left: 184px; top: 428px; }
.h4 { left: 184px; top: 442px; }
.h1::after { content: ""; position: absolute; top: 29px; width: 8px; height: 8px; border-radius: 50%; background: #fff; }
.anchor { position: absolute; left: 157px; top: 491px; width: 80px; height: 80px; }
.zoom, .device, .dpi { position: absolute; font-size: 25px; line-height: 31px; font-weight: 500; color: rgba(255, 255, 255, .27); }
.zoom { left: 8px; top: 4px; }
.device { left: 8px; bottom: 1px; font-size: 27px; }
.device .res { font-size: 24px; font-weight: 700; }
.dpi { right: 12px; bottom: 1px; display: flex; align-items: center; gap: 11px; }
.dpi svg { width: 20px; height: 20px; color: #9fb4e6; }
.resize { position: absolute; left: 999px; top: 532px; width: 24px; height: 24px; }
.view-tools { position: absolute; right: 1px; top: 1px; display: flex; align-items: center; gap: 2px; color: #111; font-weight: 500; }
.view-tools button { height: 30px; background: #b0b0b0; position: relative; }
.view-tools button svg { width: 21px; height: 21px; }
.group { display: flex; gap: 1px; border-radius: 7px; overflow: hidden; margin-right: 3px; box-shadow: 0 0 0 1px #111; }
.group button { width: 29px; }
.view-tools .loc { width: 49px; padding-bottom: 3px; }
.third { margin-left: 4px; gap: 0; }
.view-tools .rbtn { width: 29px; font-weight: 700; font-size: 18px; color: #444; }
.view-tools .four { width: 31px; font-weight: 700; font-size: 16px; padding-bottom: 4px; }
.group.fourth { margin-right: 0; margin-left: 2px; }
.view-tools button .tiny { position: absolute; bottom: 4px; left: 50%; margin-left: -2px; width: 5px; height: 3px; }
.view-tools .single { width: 28px; border-radius: 7px; box-shadow: 0 0 0 1px #111; }
.view-tools .on { background: #bd720b; }
.view-tools .off { background: #666; }
.view-tools .text { height: 25px; width: 95px; gap: 2px; font-size: 16px; border-radius: 8px; box-shadow: 0 0 0 1px #111; font-weight: 700; }
.view-tools .size { width: 83px; font-size: 15px; font-weight: 500; }
.view-tools .text svg { width: 10px; height: 6px; }

/* details */
.details .panel { padding: 3px 2px 6px 3px; overflow: hidden; }
.name-row { flex: none; height: 23px; display: flex; align-items: center; overflow: hidden; white-space: nowrap; }
.name-icon { width: 20px; height: 11px; margin-right: 3px; }
.name-row > input:not([type]) { width: 250px; flex: none; height: 22px; border: 0; border-radius: 4px; background: #ddd; color: #111; padding: 0 7px; font-size: 16px; }
input[type=checkbox] { appearance: none; flex: none; width: 18px; height: 18px; background: #ababab; border-radius: 3px; }
#isvar { margin: 0 6px 0 9px; background: #ccc url("data:image/svg+xml,%3Csvg xmlns='http://www.w3.org/2000/svg' viewBox='0 0 18 18'%3E%3Cpath d='M4 9l4 4 7-9' fill='none' stroke='%23777' stroke-width='3'/%3E%3C/svg%3E"); }
.name-row a { font-size: 16px; line-height: 19px; margin-left: 22px; }
.filter-row { flex: none; height: 39px; padding-top: 3px; display: flex; align-items: center; }
.filter-row .search { width: 319px; margin-left: 5px; }
.matrix { width: 34px; height: 29px; margin: 0 5px 0 11px; background: linear-gradient(#ddd, #aaa); border: 1px solid #333; border-radius: 2px; }
.matrix svg { width: 18px; height: 18px; }
.vis { gap: 4px; color: #aaa; }
.eye2 { width: 22px; height: 14px; }
.eyed { width: 10px; height: 6px; }
.props { position: relative; flex: 1; display: flex; flex-direction: column; gap: 2px; font-size: 14px; }
.cat-box { background: #3e3e3e; border-radius: 5px; overflow: hidden; }
.cat-box h2 { height: 27px; display: flex; align-items: center; gap: 3px; padding-left: 4px; background: #2f2f2f; font-size: 16px; font-weight: 700; text-shadow: 1px 1px 0 #000; }
.cat-box h2 svg { width: 10px; height: 9px; }
.body { background: linear-gradient(#222, #222) 137px 0 / 1px calc(100% - 3px) no-repeat; }
.slot { padding-bottom: 3px; }
.style, .prog { padding-bottom: 16px; }
.row { display: flex; }
.r27 { height: 27px; } .r28 { height: 28px; } .r30 { height: 30px; } .r31 { height: 31px; } .r32 { height: 32px; } .r34 { height: 34px; } .r40 { height: 40px; }
.k { position: relative; width: 137px; padding: 0 4px 0 20px; display: flex; align-items: center; justify-content: space-between; white-space: nowrap; }
.k label { min-width: 0; }
.ex { position: absolute; left: 5px; width: 8px; height: 10px; }
.pn { width: 12px; height: 14px; }
.v { flex: 1; display: flex; align-items: center; padding-left: 5px; }
.num { width: 131px; height: 21px; display: flex; align-items: center; gap: 10px; padding: 0 7px 0 6px; background: #d9d9d9; border-radius: 4px; color: #111; }
.num input { flex: 1; min-width: 0; width: 10px; height: 20px; padding: 0; border: 0; background: none; }
.num svg { width: 11px; height: 11px; }
.num.half { width: 113px; padding: 0 7px 0 4px; margin-right: 4px; }
.rs { width: 10px; height: 10px; margin-left: 10px; }
.v input[type=checkbox] { margin-left: 1px; }
.v .combo { width: 129px; height: 24px; margin-left: 1px; background: linear-gradient(#ddd, #aaa); box-shadow: 0 0 0 1px #222; }
.v .combo.tall { width: 133px; height: 32px; margin-right: -3px; }
.v .combo.func { width: 210px; margin-left: -4px; padding-left: 2px; }
.func select { padding: 0 0 0 9px; }
.v .func .arrow { right: 5px; }
.bind { width: 11px; height: 11px; margin-left: 7px; }
.fn { width: 18px; height: 20px; }
.find { width: 17px; height: 17px; margin-left: 5px; color: #ccc; }
.prop-scroll { position: absolute; right: 2px; top: 0; width: 15px; height: 242px; background: #fff; border: 1px solid #222; border-radius: 2px; }

/* animation list */
.anim .inner { display: flex; align-items: flex-start; gap: 3px; padding: 5px 5px 0; }
.anim .search { flex: 1; min-width: 0; margin-top: 1px; height: 23px; }
.add { flex: none; width: 100px; height: 25px; gap: 5px; background: #4da351; border-radius: 1px; color: #fff; font-weight: 500; text-shadow: 1px 1px 0 #000; }
.add svg { width: 13px; height: 13px; }

/* timeline */
.timeline { grid-column: 2 / 4; }
.tabs { flex: 0 0 26px; display: flex; gap: 3px; }
.timeline .tab { flex: none; width: 186px; height: 26px; margin-left: 0; }
.timeline .tab:first-child { margin-left: 5px; }
.timeline .back { background: #414141; }
.timeline .panel { padding: 4px 2px 2px; }
.seq-tools { flex: 0 0 39px; display: flex; align-items: center; background: #404040; border-radius: 4px 4px 0 0; color: #8d8d8d; }
.seq-tools .sep { height: 37px; }
.seq-tools button svg { width: 24px; height: 24px; }
.seq-tools .dn, .track .dn { width: 10px; height: 6px; }
.seq-tools button .dn { width: 10px; height: 6px; }
.b1 { width: 53px; }
.b2 { width: 56px; gap: 5px; }
.b3 { width: 60px; gap: 4px; }
.b4 { width: 51px; }
.magnet { width: 40px; height: 39px; margin-left: 6px; background: #8d7e78; }
.b5 { width: 36px; padding-left: 3px; }
.fps { width: 88px; gap: 3px; padding-right: 6px; font-size: 16px; }
.b6 { width: 50px; }
.seq-tools .b6 svg { width: 28px; height: 30px; }
.seq-tools .b7 { padding-left: 4px; }
.seq-tools .b7 svg { width: 18px; height: 18px; }
.seq-body { flex: 1; min-height: 0; display: flex; gap: 5px; }
.tracks { width: 486px; display: flex; flex-direction: column; justify-content: space-between; }
.track-bar { height: 32px; display: flex; align-items: center; gap: 3px; padding: 0 12px 0 8px; background: #404040; border-radius: 0 0 4px 4px; }
.track { width: 74px; height: 25px; gap: 5px; background: #75857a; border-radius: 2px; color: #c0c0c0; text-shadow: 1px 1px 0 #222; }
.track svg { width: 13px; height: 13px; }
.track-bar .search { flex: 1; background: #7a7a7a; height: 23px; }
.track-bar .search input::placeholder { color: #555; }
.track-bar .search svg { color: #2b2b2b; }
.time { margin-left: 9px; font-size: 16px; color: #a3928a; }
.transport { height: 42px; display: flex; align-items: center; justify-content: center; gap: 8px; padding-right: 6px; background: #404040; border-radius: 4px; }
.transport svg { fill: #7a7a7a; }
.transport .big { margin: 0 4px; }
.time-area { position: relative; flex: 1; min-width: 0; background: #404040; overflow: hidden; }
.ticks { position: absolute; left: 0; top: 0; }
.ticks text { font-size: 14px; fill: #666; }
.ticks .now { font-size: 16px; fill: #c5c5c5; }
.none { position: absolute; left: 165px; top: 58px; font-size: 32px; line-height: 40px; font-weight: 300; color: #eee; text-shadow: 1px 2px 1px #000; }

/* windows taskbar */
.taskbar { flex: 0 0 50px; display: flex; background: #02050b; color: #fff; }
.start { width: 60px; }
.start svg { width: 20px; height: 20px; }
.win-search { width: 430px; border: 0; padding: 2px 10px 0; background: #333; font-size: 18px; }
.app { width: 63px; border-bottom: 3px solid transparent; }
.view { width: 60px; margin-right: 2px; }
.app.run { width: 51px; margin: 0 6px; border-color: #76b9ed; }
.app.store { width: 61px; }
.app.cur { width: 60px; background: #33363c; border-color: #76b9ed; }
.tray { margin-left: auto; display: flex; align-items: center; gap: 11px; }
.ime { width: 18px; height: 18px; margin-left: 7px; background: #fff; color: #000; font-size: 15px; line-height: 17px; text-align: center; }
.clock { width: 120px; display: flex; flex-direction: column; justify-content: center; align-items: center; line-height: 24px; font-family: "Noto Sans", "Noto Sans CJK KR", sans-serif; font-size: 14px; }
.notice { position: relative; width: 47px; margin-right: 5px; padding: 15px 0 0 1px; }
.notice svg { width: 20px; height: 20px; }
.badge { position: absolute; left: 10px; top: 24px; width: 20px; height: 20px; border: 1px solid #888; border-radius: 50%; background: #2a2a2a; font-size: 13px; line-height: 18px; text-align: center; font-weight: 700; }
```

FILE: app.js
```js
const make = (svg, tag, attrs, text) => {
  const el = document.createElementNS("http://www.w3.org/2000/svg", tag);
  for (const k in attrs) el.setAttribute(k, attrs[k]);
  if (text !== undefined) el.textContent = text;
  svg.appendChild(el);
};
const rect = (svg, x, y, width, height, fill) =>
  make(svg, "rect", { x: Math.round(x), y: Math.round(y), width, height, fill });

function drawGrid() {
  const svg = document.querySelector(".grid");
  svg.replaceChildren();
  const w = svg.clientWidth, h = svg.clientHeight, step = 40 / 3, ox = 196, oy = 80;
  for (const major of [false, true]) {
    for (let i = -20; i < 300; i++) {
      if ((i % 10 === 0) !== major) continue;
      const color = i === 0 ? "#000" : major ? "#161616" : "#343434";
      if (ox + i * step < w) rect(svg, ox + i * step, 0, 1, h, color);
      if (oy + i * step < h) rect(svg, 0, oy + i * step, w, 1, color);
    }
  }
}

function drawRulers() {
  const sx = document.querySelector(".ruler-x"), sy = document.querySelector(".ruler-y");
  const w = sx.clientWidth, h = sy.clientHeight, step = 125 / 6;
  sx.replaceChildren();
  sy.replaceChildren();
  rect(sx, 0, 22, w, 1, "#666");
  rect(sy, 22, 0, 1, h, "#666");
  for (let i = -9; i < 120; i++) {
    const len = i % 10 === 0 ? 9 : i % 5 === 0 ? 7 : 3;
    const x = 197 + i * step, y = 81 + i * step;
    if (x > 0 && x < w) rect(sx, x, 22 - len, 1, len, "#707070");
    if (y > 0 && y < h) rect(sy, 22 - len, y, len, 1, "#707070");
    if (i >= 0 && i % 10 === 0) {
      if (x < w) make(sx, "text", { x: Math.round(x), y: 14 }, i * 50);
      const digits = String(i * 50).split("");
      if (y < h) digits.forEach((d, n) =>
        make(sy, "text", { x: 8, y: Math.round(y + 3 + (n - (digits.length - 1) / 2) * 13) }, d));
    }
  }
  rect(sx, 1041, 0, 1, 22, "#1fd01f");
  rect(sy, 0, 425, 22, 1, "#1fd01f");
}

function drawTimeline() {
  const svg = document.querySelector(".ticks");
  svg.replaceChildren();
  const w = svg.clientWidth, h = svg.clientHeight, zero = 93, half = 94, end = zero + 10 * half;
  rect(svg, 0, 0, w, 33, "#333");
  rect(svg, 0, h - 42, w, 42, "#333");
  rect(svg, 0, 0, zero, h, "rgba(0,0,0,.3)");
  rect(svg, end, 0, w - end, h, "rgba(0,0,0,.3)");
  rect(svg, 0, h - 43, w, 1, "#4a4a4a");
  for (let i = -1; zero + i * half + 60 < w; i++) {
    const x = zero + i * half;
    if (i > 0) {
      rect(svg, x, 33, 1, h - 76, "#373737");
      rect(svg, x, 22, 1, 11, "#909090");
      rect(svg, x, h - 42, 1, 11, "#909090");
    }
    rect(svg, x + half / 2, 26, 1, 7, "#909090");
    rect(svg, x + half / 2, h - 42, 1, 7, "#909090");
    if (i !== 0) {
      const label = (i / 2).toFixed(2) + " s", lx = Math.max(x + 7, 6);
      const fill = i < 0 || i === 10 ? "#4b4b4b" : "#6c6c6c";
      make(svg, "text", { x: lx, y: 31, style: "fill:" + fill }, label);
      make(svg, "text", { x: lx, y: h - 27, style: "fill:" + fill }, label);
    }
  }
  rect(svg, zero, 0, 2, h, "#2a8a2e");
  rect(svg, end, 0, 1, h, "#9b1c1c");
  make(svg, "path", { d: `M${end} 0h-7l7 7zM${end} ${h}h-7l7-7z`, fill: "#8a1c1c" });
  make(svg, "path", { d: `M${zero - 7} 1h15v23l-7 8-8-8zM${zero - 7} ${h - 1}h15v-31l-7-8-8 8z`, fill: "#7d6865", stroke: "#5b4a48" });
  make(svg, "text", { x: zero + 12, y: 15, class: "now" }, "0.00 s");
  make(svg, "text", { x: zero + 12, y: h - 4, class: "now" }, "0.00 s");
}

function draw() {
  drawGrid();
  drawRulers();
  drawTimeline();
}
draw();
addEventListener("resize", draw);
```
